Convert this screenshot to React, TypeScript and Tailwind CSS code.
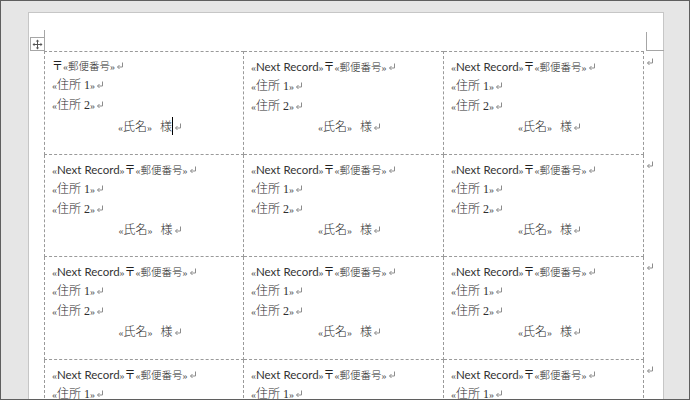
import React from 'react';

// label sheet preview: 3 columns x 4 visible rows
const rows = [
  { h: 'h-[104px]', top: true },
  { h: 'h-[102px]', top: false },
  { h: 'h-[103px]', top: false },
  { h: 'h-[103px]', top: false },
];

function ParaMark() {
  return (
    <svg width="8" height="8" viewBox="0 0 8 8" className="inline-block align-baseline ml-[1px]">
      <path d="M6.5 0.5 V5 H1.5" fill="none" stroke="#8c8c8c" strokeWidth="1" />
      <path d="M3.5 3 L1.5 5 L3.5 7" fill="none" stroke="#8c8c8c" strokeWidth="1" />
    </svg>
  );
}

function Chev({ c }: { c: string }) {
  return <span className="text-[10px] text-[#555]">{c}</span>;
}

function Field({ children, small }: { children: React.ReactNode; small?: boolean }) {
  return (
    <>
      <Chev c="«" />
      <span className={small ? 'text-[10.5px]' : ''}>{children}</span>
      <Chev c="»" />
    </>
  );
}

function Cell({ first, caret, left, top }: { first?: boolean; caret?: boolean; left?: boolean; top?: boolean }) {
  return (
    <div
      className={cn(
        'w-[200px] shrink-0 border-r border-b border-dashed border-[#9a9a9a] pl-[7px] pr-[7px] pt-[5px] text-[12px] leading-[19px] text-[#2e2e2e] font-light',
        left && 'border-l',
        top && 'border-t'
      )}
    >
      <div className="whitespace-nowrap">
        {first ? null : (
          <>
            <Chev c="«" />
            <span className="font-['Lato',sans-serif] font-normal text-[11.5px] text-[#333]">Next Record</span>
            <Chev c="»" />
          </>
        )}
        <span className="text-[11px] font-normal text-[#222]">〒</span>
        <Field small>郵便番号</Field>
        <ParaMark />
      </div>
      <div className="whitespace-nowrap leading-[19.5px]">
        <Field>住所 1</Field>
        <ParaMark />
      </div>
      <div className="whitespace-nowrap leading-[19.5px]">
        <Field>住所 2</Field>
        <ParaMark />
      </div>
      <div className="whitespace-nowrap text-center mt-[2px] pl-[12px]">
        <Field>氏名</Field>
        <span className="inline-block w-[8px]" />
        様
        {caret && <span className="inline-block w-px h-[18px] bg-black align-[-4px]" />}
        <ParaMark />
      </div>
    </div>
  );
}

function MoveHandle() {
  return (
    <div className="absolute left-[1px] top-[24px] w-[15px] h-[14px] border border-[#a6a6a6] bg-white flex items-center justify-center">
      <svg width="11" height="11" viewBox="0 0 11 11">
        <path d="M5.5 1 V10 M1 5.5 H10" stroke="#555" strokeWidth="1" />
        <path d="M5.5 0.5 L3.8 2.5 H7.2 Z M5.5 10.5 L3.8 8.5 H7.2 Z M0.5 5.5 L2.5 3.8 V7.2 Z M10.5 5.5 L8.5 3.8 V7.2 Z" fill="#555" />
      </svg>
    </div>
  );
}

export default function App() {
  return (
    <div className="w-[690px] h-[400px] overflow-hidden border border-[#5f5f5f] bg-[#e6e6e6] font-['Liberation_Serif','Noto_Sans_CJK_JP',serif]">
      <div className="relative ml-[27px] mt-[11px] w-[636px] h-[420px] bg-white border border-[#c6c6c6]">
        {/* corner marks */}
        <div className="absolute left-[15px] top-[17px] w-px h-[8px] bg-[#a6a6a6]" />
        <MoveHandle />
        <div className="absolute left-[617px] top-[19px] w-px h-[19px] bg-[#a6a6a6]" />
        <div className="absolute left-[617px] top-[37px] w-[18px] h-px bg-[#a6a6a6]" />

        <div className="ml-[15px] mt-[38px] flex flex-col">
          {rows.map((r, ri) => (
            <div key={ri} className={cn('flex items-start', r.h)}>
              <div className="flex h-full">
                {[0, 1, 2].map((ci) => (
                  <Cell
                    key={ci}
                    first={ri === 0 && ci === 0}
                    caret={ri === 0 && ci === 0}
                    left={ci === 0}
                    top={r.top}
                  />
                ))}
              </div>
              <div className={cn('ml-[2px] flex', r.top ? 'mt-[7px]' : 'mt-[6px]')}>
                <svg width="8" height="8" viewBox="0 0 8 8" className="block">
                  <path d="M6.5 0.5 V5 H1.5" fill="none" stroke="#8c8c8c" strokeWidth="1" />
                  <path d="M3.5 3 L1.5 5 L3.5 7" fill="none" stroke="#8c8c8c" strokeWidth="1" />
                </svg>
              </div>
            </div>
          ))}
        </div>
      </div>
    </div>
  );
}

function cn(...inputs: any[]) {
  return inputs.filter(Boolean).join(' ');
}
